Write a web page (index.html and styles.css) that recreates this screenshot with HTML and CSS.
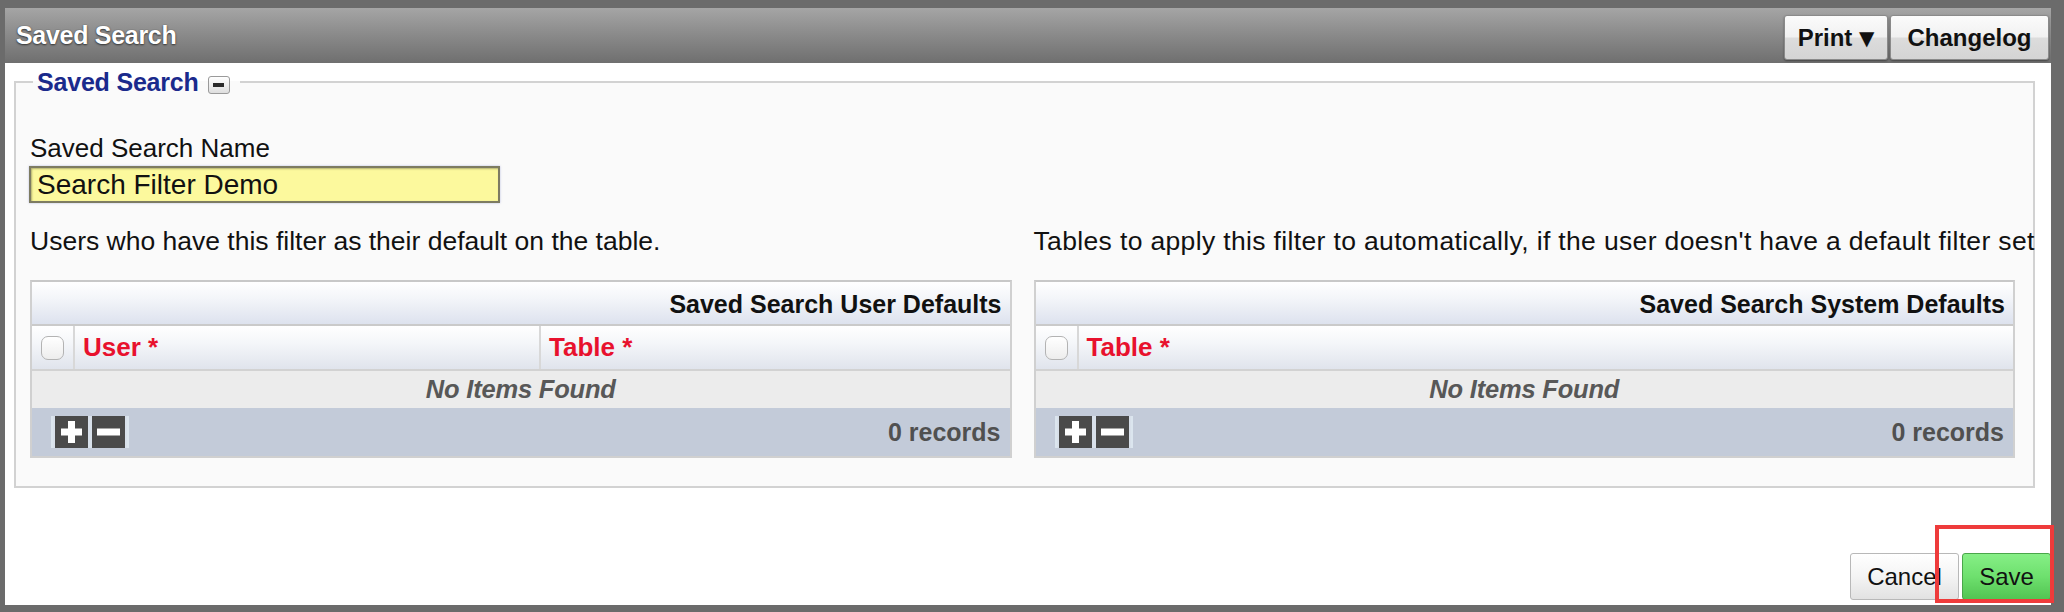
FILE: index.html
```html
<!DOCTYPE html>
<html lang="en">
<head>
<meta charset="utf-8">
<title>Saved Search</title>
<link rel="stylesheet" href="styles.css">
</head>
<body>
<div class="dialog">
  <div class="titlebar">
    <span class="title">Saved Search</span>
    <div class="tb-buttons">
      <button class="tbtn tbtn-print">Print <span class="caret">&#9660;</span></button>
      <button class="tbtn tbtn-log">Changelog</button>
    </div>
  </div>
  <div class="dlg-body">
    <fieldset class="fs">
      <legend class="fs-legend"><span class="legend-text">Saved Search</span><span class="collapse"><span class="dash"></span></span></legend>
      <label class="lbl" for="ssname">Saved Search Name</label>
      <input id="ssname" class="name-input" type="text" value="Search Filter Demo">
      <div class="cols">
        <div class="col">
          <p class="desc">Users who have this filter as their default on the table.</p>
          <div class="grid">
            <div class="grid-title">Saved Search User Defaults</div>
            <div class="grid-head">
              <div class="cell-check"><span class="chk"></span></div>
              <div class="cell cell-user">User *</div>
              <div class="cell">Table *</div>
            </div>
            <div class="grid-empty">No Items Found</div>
            <div class="grid-foot">
              <div class="icons">
                <span class="ico ico-plus"><svg viewBox="0 0 33 32" width="33" height="32"><rect x="6" y="12.5" width="21" height="7" fill="#fff"/><rect x="13" y="5" width="7" height="22" fill="#fff"/></svg></span>
                <span class="ico ico-minus"><svg viewBox="0 0 33 32" width="33" height="32"><rect x="5" y="12.5" width="23" height="7" fill="#fff"/></svg></span>
              </div>
              <span class="records">0 records</span>
            </div>
          </div>
        </div>
        <div class="col">
          <p class="desc desc-right">Tables to apply this filter to automatically, if the user doesn't have a default filter set</p>
          <div class="grid">
            <div class="grid-title">Saved Search System Defaults</div>
            <div class="grid-head">
              <div class="cell-check"><span class="chk"></span></div>
              <div class="cell">Table *</div>
            </div>
            <div class="grid-empty">No Items Found</div>
            <div class="grid-foot">
              <div class="icons">
                <span class="ico ico-plus"><svg viewBox="0 0 33 32" width="33" height="32"><rect x="6" y="12.5" width="21" height="7" fill="#fff"/><rect x="13" y="5" width="7" height="22" fill="#fff"/></svg></span>
                <span class="ico ico-minus"><svg viewBox="0 0 33 32" width="33" height="32"><rect x="5" y="12.5" width="23" height="7" fill="#fff"/></svg></span>
              </div>
              <span class="records">0 records</span>
            </div>
          </div>
        </div>
      </div>
    </fieldset>
    <div class="actions">
      <button class="btn btn-cancel">Cancel</button>
      <button class="btn btn-save">Save</button>
      <span class="highlight"></span>
    </div>
  </div>
</div>
</body>
</html>
```

FILE: styles.css
```css
* { box-sizing: border-box; }

html, body {
  margin: 0;
  padding: 0;
  height: 612px;
  overflow: hidden;
}

body {
  background: #6b6b6b;
  font-family: "Liberation Sans", Arial, Helvetica, sans-serif;
  color: #111;
}

.dialog {
  margin: 8px 13px 0 5px;
  height: 597px;
  background: #fff;
  display: flex;
  flex-direction: column;
}

.titlebar {
  height: 55px;
  flex: 0 0 55px;
  background: linear-gradient(#a5a5a5 0%, #8c8c8c 45%, #6f6f6f 100%);
  display: flex;
  justify-content: space-between;
  align-items: flex-start;
  padding: 0 2px 0 11px;
}

.title {
  color: #fff;
  font-weight: bold;
  font-size: 25px;
  line-height: 55px;
  text-shadow: 0 1px 2px #333, 0 0 1px #555;
  letter-spacing: -0.3px;
}

.tb-buttons {
  display: flex;
  gap: 2px;
  padding-top: 7px;
}

.tbtn {
  height: 45px;
  font-family: "Liberation Sans", Arial, sans-serif;
  font-weight: bold;
  font-size: 24px;
  color: #111;
  border: 1px solid #8a8a8a;
  border-radius: 3px;
  background: linear-gradient(#fbfbfb 0%, #f1f1f1 48%, #dcdcdc 52%, #d4d4d4 100%);
  box-shadow: 0 1px 2px rgba(0,0,0,0.4);
  padding: 0;
  text-align: center;
}

.tbtn-print { width: 104px; }
.tbtn-log { width: 159px; }

.caret {
  font-family: "DejaVu Sans", sans-serif;
  font-size: 20px;
  vertical-align: 1px;
}

.dlg-body {
  flex: 1;
  display: flex;
  flex-direction: column;
}

.fs {
  margin: 4px 16px 0 9px;
  border: 2px solid #d2d2d2;
  background: #fafafa;
  padding: 36px 18px 28px 14px;
  min-width: 0;
}

.fs-legend {
  margin-left: 3px;
  padding: 0 10px 0 4px;
  height: 30px;
  line-height: 30px;
  display: flex;
  align-items: center;
  gap: 9px;
}

.legend-text {
  color: #1a2a8c;
  font-weight: bold;
  font-size: 25px;
  letter-spacing: -0.2px;
}

.collapse {
  width: 22px;
  height: 18px;
  border: 1px solid #9a9a9a;
  border-radius: 3px;
  background: linear-gradient(#ffffff, #dedede);
  display: flex;
  align-items: center;
  justify-content: center;
  margin-top: 5px;
}

.dash {
  width: 11px;
  height: 4px;
  background: #2a2a2a;
}

.lbl {
  display: block;
  font-size: 26px;
  line-height: 30px;
  color: #111;
}

.name-input {
  display: block;
  margin: 3px 0 0 -1px;
  width: 471px;
  height: 37px;
  background: #fcf99d;
  border: 2px solid #7d7b62;
  box-shadow: inset 1px 1px 2px rgba(0,0,0,0.3), 0 0 2px rgba(120,130,200,0.5);
  font-family: "Liberation Sans", Arial, sans-serif;
  font-size: 28px;
  color: #111;
  padding: 0 0 0 6px;
  outline: none;
}

.cols {
  display: grid;
  grid-template-columns: minmax(0, 1fr) minmax(0, 1fr);
  column-gap: 22px;
}

.col {
  min-width: 0;
}

.desc {
  margin: 23px 0 24px 0;
  font-size: 26.5px;
  line-height: 30px;
  white-space: nowrap;
  color: #111;
}

.desc-right {
  letter-spacing: 0.35px;
}

.grid {
  border: 2px solid #d0d0d0;
  border-top-color: #c8c8c8;
}

.grid-title {
  height: 44px;
  line-height: 44px;
  border-bottom: 2px solid #cacaca;
  background: linear-gradient(#ffffff 0%, #f3f5f9 40%, #dde2ee 100%);
  text-align: right;
  padding-right: 8px;
  font-weight: bold;
  font-size: 25px;
  color: #111;
}

.grid-head {
  height: 45px;
  display: flex;
  border-bottom: 2px solid #d2d2d2;
  background: linear-gradient(#ffffff 0%, #f4f6f9 40%, #e0e4ec 100%);
}

.cell-check {
  width: 43px;
  flex: 0 0 43px;
  border-right: 2px solid #d8d8d8;
  display: flex;
  align-items: center;
  justify-content: center;
}

.chk {
  width: 23px;
  height: 24px;
  border: 1.5px solid #b3b3b3;
  border-radius: 7px;
  background: linear-gradient(#ffffff, #ededed);
}

.cell {
  flex: 1;
  padding-left: 8px;
  color: #e8112d;
  font-weight: bold;
  font-size: 26px;
  line-height: 43px;
}

.cell-user {
  flex: 0 0 466px;
  border-right: 2px solid #d8d8d8;
}

.grid-empty {
  height: 37px;
  line-height: 37px;
  background: #ececec;
  text-align: center;
  font-weight: bold;
  font-style: italic;
  font-size: 25.5px;
  color: #585858;
  letter-spacing: -0.2px;
}

.grid-foot {
  height: 48px;
  background: #c3cbd9;
  display: flex;
  align-items: center;
  justify-content: space-between;
  padding: 0 9px 0 19px;
}

.icons {
  display: flex;
  gap: 4px;
  padding: 0 2px;
  border-left: 2px solid #dbe5ee;
  border-right: 2px solid #dbe5ee;
  background: #d8e0ea;
}

.ico {
  display: block;
  width: 33px;
  height: 32px;
  background: #4a4a4a;
}

.ico svg { display: block; }

.records {
  font-weight: bold;
  font-size: 25px;
  color: #505050;
}

.actions {
  position: relative;
  margin-top: 65px;
  align-self: flex-end;
  display: flex;
  gap: 3px;
}

.btn {
  height: 47px;
  font-family: "Liberation Sans", Arial, sans-serif;
  font-size: 24px;
  color: #111;
  border-radius: 3px;
  padding: 0;
}

.btn-cancel {
  width: 109px;
  border: 1px solid #b8b8b8;
  background: linear-gradient(#ffffff 0%, #f4f4f4 50%, #e2e2e2 100%);
}

.btn-save {
  width: 89px;
  border: 1px solid #4aa64a;
  background: linear-gradient(#86ef86 0%, #6ee06e 50%, #52c452 100%);
}

.highlight {
  position: absolute;
  right: -3px;
  top: -28px;
  width: 119px;
  height: 78px;
  border: 4px solid #ee3b3b;
  pointer-events: none;
}
```
